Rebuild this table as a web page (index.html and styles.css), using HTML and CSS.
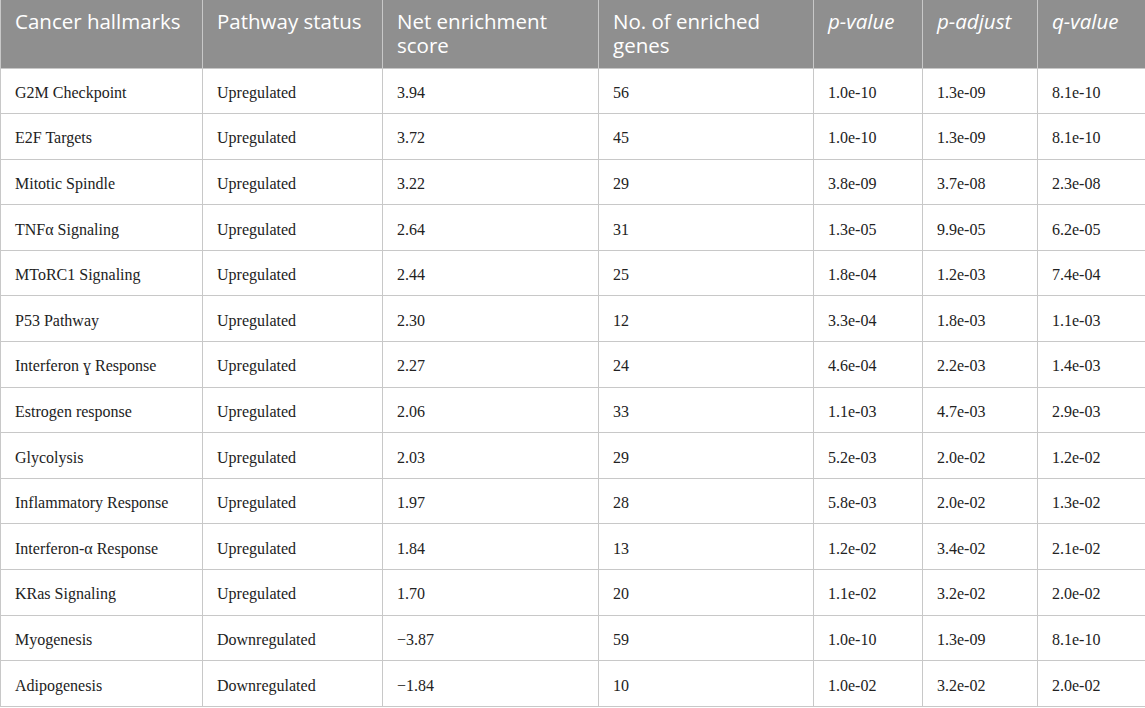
FILE: index.html
```html
<!DOCTYPE html>
<html>
<head>
<meta charset="utf-8">
<link rel="stylesheet" href="styles.css">
</head>
<body>
<table class="hallmarks">
  <colgroup>
    <col class="c1"><col class="c2"><col class="c3"><col class="c4"><col class="c5"><col class="c6"><col class="c7">
  </colgroup>
  <thead>
    <tr>
      <th>Cancer hallmarks</th>
      <th>Pathway status</th>
      <th>Net enrichment score</th>
      <th>No. of enriched genes</th>
      <th class="it">p-value</th>
      <th class="it">p-adjust</th>
      <th class="it">q-value</th>
    </tr>
  </thead>
  <tbody>
    <tr><td>G2M Checkpoint</td><td>Upregulated</td><td>3.94</td><td>56</td><td>1.0e-10</td><td>1.3e-09</td><td>8.1e-10</td></tr>
    <tr><td>E2F Targets</td><td>Upregulated</td><td>3.72</td><td>45</td><td>1.0e-10</td><td>1.3e-09</td><td>8.1e-10</td></tr>
    <tr><td>Mitotic Spindle</td><td>Upregulated</td><td>3.22</td><td>29</td><td>3.8e-09</td><td>3.7e-08</td><td>2.3e-08</td></tr>
    <tr><td>TNFα Signaling</td><td>Upregulated</td><td>2.64</td><td>31</td><td>1.3e-05</td><td>9.9e-05</td><td>6.2e-05</td></tr>
    <tr><td>MToRC1 Signaling</td><td>Upregulated</td><td>2.44</td><td>25</td><td>1.8e-04</td><td>1.2e-03</td><td>7.4e-04</td></tr>
    <tr><td>P53 Pathway</td><td>Upregulated</td><td>2.30</td><td>12</td><td>3.3e-04</td><td>1.8e-03</td><td>1.1e-03</td></tr>
    <tr><td>Interferon ɣ Response</td><td>Upregulated</td><td>2.27</td><td>24</td><td>4.6e-04</td><td>2.2e-03</td><td>1.4e-03</td></tr>
    <tr><td>Estrogen response</td><td>Upregulated</td><td>2.06</td><td>33</td><td>1.1e-03</td><td>4.7e-03</td><td>2.9e-03</td></tr>
    <tr><td>Glycolysis</td><td>Upregulated</td><td>2.03</td><td>29</td><td>5.2e-03</td><td>2.0e-02</td><td>1.2e-02</td></tr>
    <tr><td>Inflammatory Response</td><td>Upregulated</td><td>1.97</td><td>28</td><td>5.8e-03</td><td>2.0e-02</td><td>1.3e-02</td></tr>
    <tr><td>Interferon-α Response</td><td>Upregulated</td><td>1.84</td><td>13</td><td>1.2e-02</td><td>3.4e-02</td><td>2.1e-02</td></tr>
    <tr><td>KRas Signaling</td><td>Upregulated</td><td>1.70</td><td>20</td><td>1.1e-02</td><td>3.2e-02</td><td>2.0e-02</td></tr>
    <tr><td>Myogenesis</td><td>Downregulated</td><td>−3.87</td><td>59</td><td>1.0e-10</td><td>1.3e-09</td><td>8.1e-10</td></tr>
    <tr><td>Adipogenesis</td><td>Downregulated</td><td>−1.84</td><td>10</td><td>1.0e-02</td><td>3.2e-02</td><td>2.0e-02</td></tr>
  </tbody>
</table>
</body>
</html>
```
FILE: styles.css
```css
html, body {
  margin: 0;
  padding: 0;
  background: #ffffff;
}

.hallmarks {
  width: 1145px;
  border-collapse: collapse;
  table-layout: fixed;
}

.c1 { width: 202px; }
.c2 { width: 180px; }
.c3 { width: 216px; }
.c4 { width: 215px; }
.c5 { width: 109px; }
.c6 { width: 115px; }
.c7 { width: 108px; }

.hallmarks th {
  background: #8f8f8f;
  color: #ffffff;
  font-family: "Open Sans", "Liberation Sans", sans-serif;
  font-weight: 400;
  font-size: 20.5px;
  line-height: 24px;
  text-align: left;
  vertical-align: top;
  height: 68px;
  box-sizing: border-box;
  padding: 9px 10px 0 14px;
  border: 1px solid #c8c8c8;
  border-top: none;
}

.hallmarks th.it {
  font-style: italic;
}

.hallmarks td {
  font-family: "Liberation Serif", "Times New Roman", serif;
  font-size: 16px;
  color: #222222;
  height: 45.6px;
  box-sizing: border-box;
  padding: 4px 10px 0 14px;
  vertical-align: middle;
  border: 1px solid #c8c8c8;
}
```
